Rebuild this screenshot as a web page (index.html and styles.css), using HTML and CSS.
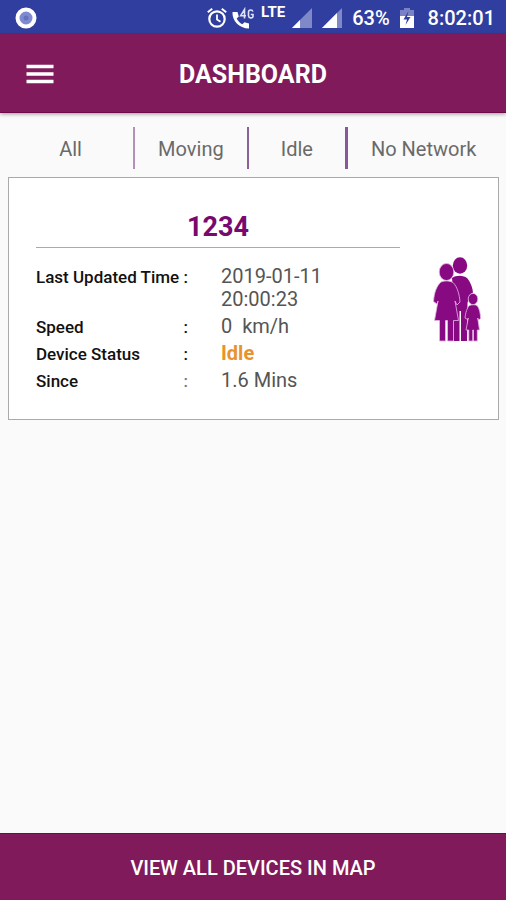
FILE: index.html
```html
<!DOCTYPE html>
<html lang="en">
<head>
<meta charset="utf-8">
<meta name="viewport" content="width=device-width, initial-scale=1">
<title>Dashboard</title>
<link rel="stylesheet" href="styles.css">
</head>
<body>
<div class="status">
  <svg class="dot" width="22" height="22" viewBox="0 0 22 22"><circle cx="11" cy="11" r="8.5" fill="#7f8bd0" stroke="#fff" stroke-width="4"/><circle cx="11" cy="11" r="2.5" fill="#6672c0"/></svg>
  <div class="status-icons">
    <svg width="20" height="22" viewBox="0 0 20 22" fill="none" stroke="#fff"><circle cx="10" cy="12" r="7.7" stroke-width="2.2"/><path d="M10 7.5v5l3.5 2.2" stroke-width="1.8"/><path d="M.8 5.3 5.2 1.7M19.2 5.3l-4.400-3.600" stroke-width="2"/></svg>
    <svg class="call" width="22" height="22" viewBox="0 0 22 22"><path d="M.5 5C0 13.500 7 21.500 17 21.500V16.500L12.500 15.200 10.300 17.200C7.800 16 5.800 13.800 4.700 11.500L6.800 9.500 5.500 5z" fill="#fff"/><path d="M12.500 11.500V2.500L8.700 8.700H14M20.800 4.600C20.500 2.500 16.700 2.300 16.500 5v3.700c.2 2.800 4 2.700 4.500 1V7.500H18.800" fill="none" stroke="#dfe3f7" stroke-width="1.600"/></svg>
    <span class="lte">LTE</span>
    <svg class="signal" width="20" height="20" viewBox="0 0 20 20"><path d="M20 0v20H0z" fill="#8089c8"/><path d="M8 12v8H0z" fill="#fff"/></svg>
    <svg class="signal" width="20" height="20" viewBox="0 0 20 20"><path d="M20 0v20H0z" fill="#8089c8"/><path d="M15 5v15H0z" fill="#fff"/></svg>
    <span class="percent">63%</span>
    <svg class="battery" width="14" height="20" viewBox="0 0 14 20"><path d="M4 0h6v2h4v7H0V2h4z" fill="#7882c4"/><path d="M0 8h14v12H0z" fill="#fff"/><path d="M8.500 3 3.500 11.500H7L5.500 17l5-8H7z" fill="#303f9f"/></svg>
    <span class="clock">8:02:01</span>
  </div>
</div>
<header class="bar">
  <button class="menu" type="button" aria-label="Menu"><svg width="28" height="20" viewBox="0 0 28 20"><path d="M.5 2.500h27M.5 10h27M.5 17.500h27" stroke="#fff" stroke-width="3.500"/></svg></button>
  <h1>DASHBOARD</h1>
</header>
<main>
  <nav class="tabs">
    <button type="button" class="tab all">All</button>
    <button type="button" class="tab moving">Moving</button>
    <button type="button" class="tab idle">Idle</button>
    <button type="button" class="tab none">No Network</button>
  </nav>
  <section class="card">
    <div class="info">
      <h2>1234</h2>
      <dl>
        <dt>Last Updated Time <span>:</span></dt><dd>2019-01-11 20:00:23</dd>
        <dt>Speed <span>:</span></dt><dd>0&nbsp; km/h</dd>
        <dt>Device Status <span>:</span></dt><dd class="state">Idle</dd>
        <dt>Since <span class="light">:</span></dt><dd>1.6 Mins</dd>
      </dl>
    </div>
    <svg class="family" width="48" height="86" viewBox="0 0 48 86" fill="#870a82">
      <ellipse cx="27" cy="8.500" rx="7.200" ry="8.300"/>
      <path d="M19 21C23 18 31 18 34.500 21.500 38 26 39.500 31 40 35.500L36.500 38 34.500 46 34 84H28V54H26.500V84H20.500V40z"/>
      <g stroke="#e3b8e2" stroke-width=".8">
        <ellipse cx="13.500" cy="15" rx="7.300" ry="8.500"/>
        <path d="M8 25C11 23.500 17 23.500 20 25.500 24.500 30 26.500 38 27 45L24 48 22 44 25.500 63.500H20.500V84H14.500V63.500H12.500V84H6.500V63.500H1.500L5 44 4 47 .5 44.500C1 36 3.500 29 8 25z"/>
        <ellipse cx="40" cy="42" rx="4.800" ry="5.600"/>
        <path d="M36.500 48.500C38 47.500 42.500 47.500 44 48.500 46.500 51 47.500 57 47.600 61.500L45.500 63 44.700 61 46.500 73H44.300V84H40.500V73H39.700V84H35.800V73H33L35.300 61 34.500 62.500 32 61C32.500 56 34 50.500 36.500 48.500z"/>
      </g>
    </svg>
  </section>
</main>
<button class="map" type="button">VIEW ALL DEVICES IN MAP</button>
</body>
</html>
```
FILE: styles.css
```css
* { box-sizing: border-box; }
body {
  margin: 0;
  min-height: 100vh;
  display: flex;
  flex-direction: column;
  background: #fafafa;
  color: #555;
  font-family: Roboto, "Liberation Sans", sans-serif;
}
button {
  border: 0;
  padding: 0;
  background: none;
  color: inherit;
  font: inherit;
}
svg { display: block; flex: none; }
.status {
  height: 34px;
  display: flex;
  align-items: center;
  justify-content: space-between;
  padding: 2px 11px 0 15px;
  background: #303f9f;
  color: #fff;
  font-size: 20px;
  font-weight: 500;
}
.status-icons { display: flex; align-items: center; }
.call { margin-left: 5px; }
.lte { align-self: flex-start; margin: -2px 7px 0; font-size: 15px; line-height: 16px; font-weight: 700; }
.signal { margin-right: 10px; }
.percent { margin-right: 10px; }
.battery { margin-right: 14px; }
.bar {
  height: 79px;
  display: grid;
  grid-template-columns: 28px 1fr 28px;
  align-items: center;
  padding: 2px 26px 0;
  background: #801a5a;
  color: #fff;
  border-bottom: 1px solid #6c0b48;
  box-shadow: 0 1px 4px rgba(0, 0, 0, .4);
}
h1 {
  margin: 0;
  text-align: center;
  font-size: 25px;
  font-weight: 700;
}
main { flex: 1; padding: 14px 7px 0 8px; }
.tabs { display: flex; height: 42px; }
.tab { padding-top: 2px; border-right: 2px solid #b38fba; font-size: 20px; color: #6a6a6a; }
.all { flex: 127; }
.moving { flex: 113; border-color: #8c619a; }
.idle { flex: 98; border-right: 3px solid #87599a; }
.none { flex: 153; border: 0; }
.card {
  display: flex;
  align-items: center;
  justify-content: space-between;
  margin-top: 8px;
  padding: 29px 17px 27px 27px;
  background: #fff;
  border: 1px solid #aaa;
}
.info { flex: 1; margin-right: 33px; }
h2 {
  margin: 0 0 17px;
  border-bottom: 1px solid #aaa;
  text-align: center;
  color: #78096f;
  font-size: 27px;
  line-height: 40px;
  font-weight: 700;
}
dl {
  display: grid;
  grid-template-columns: 152px 1fr;
  gap: 4px 33px;
  margin: 0;
  line-height: 23px;
}
dt { display: flex; justify-content: space-between; padding-top: 1px; font-size: 17px; line-height: 22px; font-weight: 500; color: #111; }
dd { margin: 0; max-width: 120px; font-size: 20px; }
.light { color: #777; }
.state { color: #e8932f; font-weight: 700; }
.map {
  height: 67px;
  padding-top: 2px;
  background: #801a5a;
  border-top: 1px solid #6c0b48;
  color: #fff;
  font-size: 20px;
  font-weight: 500;
}
```
